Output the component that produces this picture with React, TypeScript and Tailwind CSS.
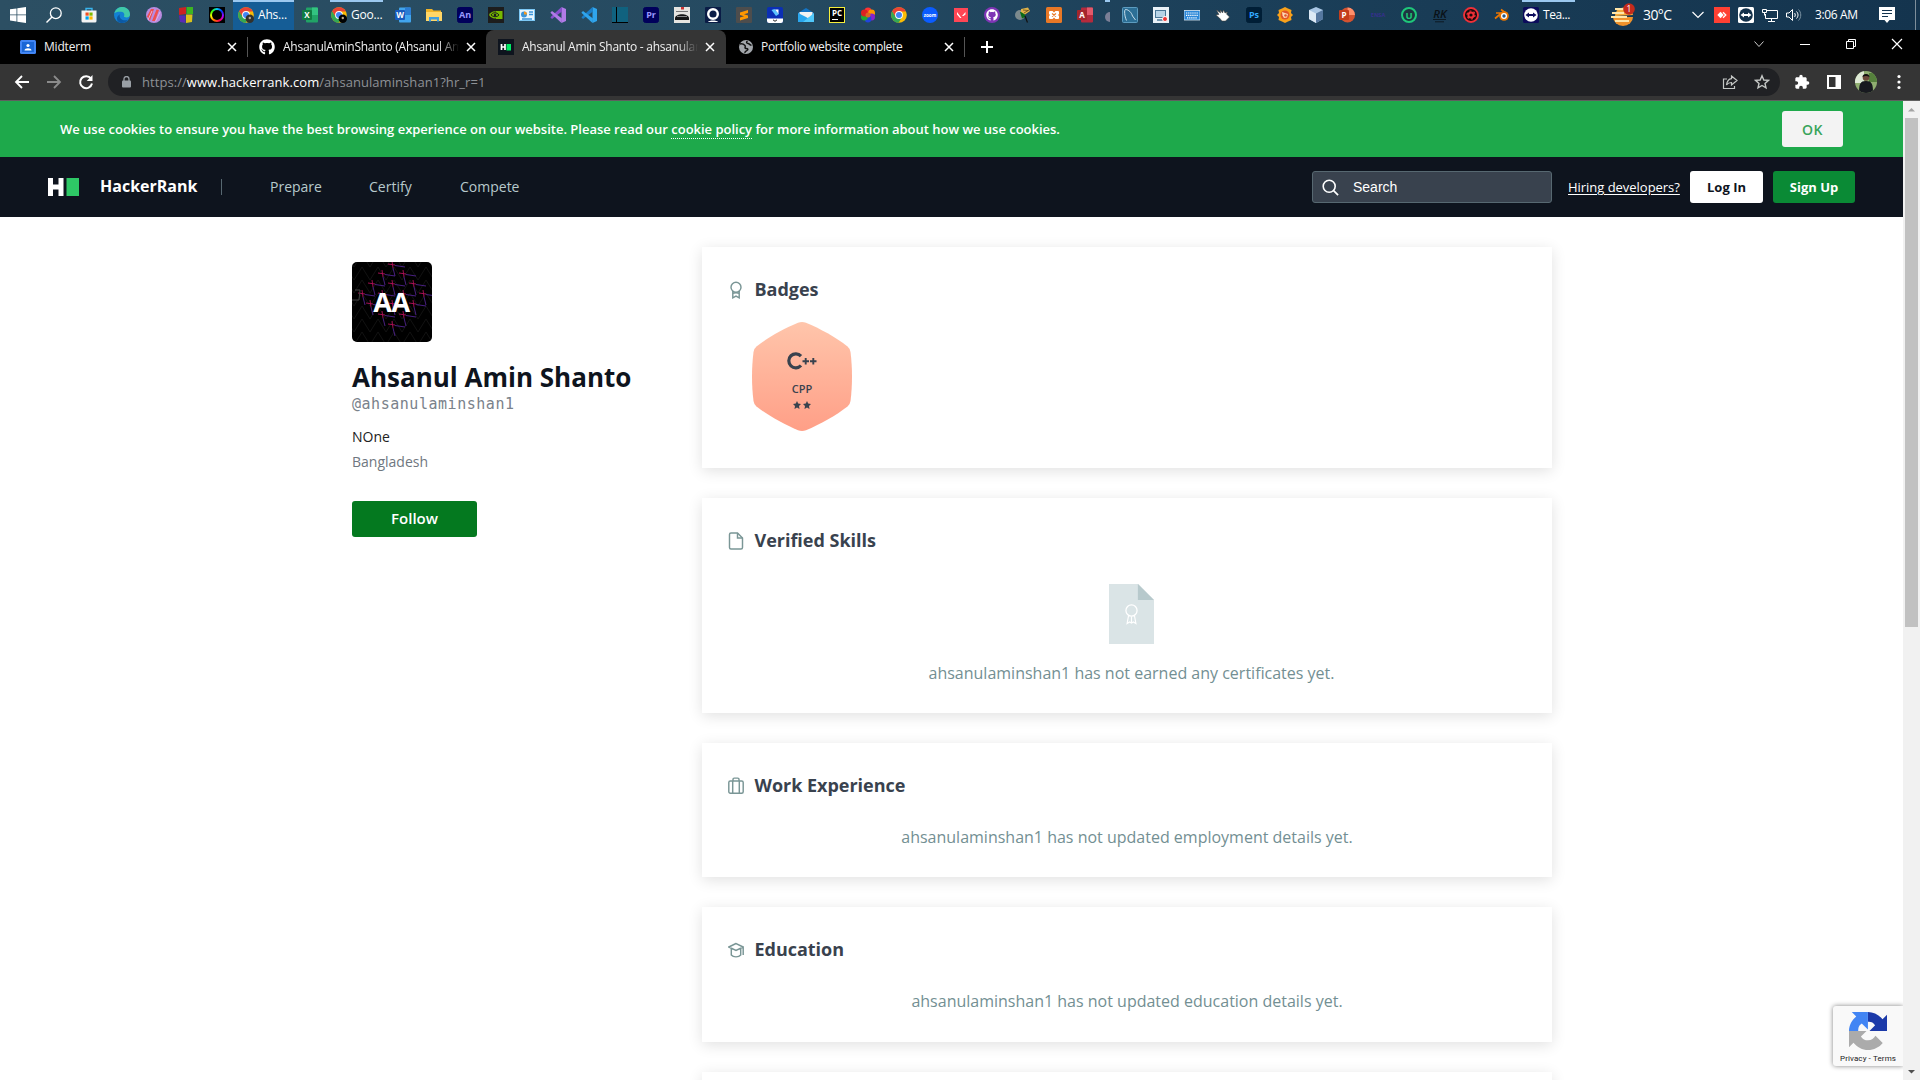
import React from "react";
import { FaGithub } from "react-icons/fa";
import { MdExtension } from "react-icons/md";

type P = { children?: React.ReactNode; size?: number; vb?: string; className?: string };

const Ic = ({ children, size = 16, vb = "0 0 16 16", className = "" }: P) => (
  <svg width={size} height={size} viewBox={vb} fill="none" className={"block shrink-0 " + className}>
    {children}
  </svg>
);

const Glyph = ({ x = 8, y = 11, s = 8, fill = "#fff", w = 700, children }: any) => (
  <text x={x} y={y} fontSize={s} fill={fill} fontWeight={w} textAnchor="middle" fontFamily="Open Sans, sans-serif">
    {children}
  </text>
);

const Chrome = ({ avatar }: { avatar?: string }) => (
  <Ic>
    <circle cx="8" cy="8" r="7.8" fill="#fbbc05" />
    <path d="M1.2 4.1A7.8 7.8 0 0 0 7.6 15.8L11.2 9.8 8 8 4.9 10Z" fill="#34a853" />
    <path d="M1.2 4.2A7.8 7.8 0 0 1 14.8 4.4H8L4.8 9.8Z" fill="#ea4335" />
    <circle cx="8" cy="8" r="3.9" fill="#fff" />
    <circle cx="8" cy="8" r="3" fill="#4285f4" />
    {avatar && <circle cx="11.8" cy="11.8" r="4.2" fill={avatar} />}
    {avatar && <circle cx="11.8" cy="11" r="1.2" fill="#b9a58c" />}
  </Ic>
);

const Office = ({ back, mid, front, l, round }: any) => (
  <Ic>
    {round ? <circle cx="8.6" cy="8" r="7.4" fill={mid} /> : <rect x="4" y="0.5" width="12" height="15" rx="1" fill={mid} />}
    <path d={round ? "M8.6 .6A7.4 7.4 0 0 1 16 8H8.6Z" : "M10 .5h5a1 1 0 0 1 1 1V8h-6Z"} fill={back} />
    <rect x="0" y="3" width="10" height="10" rx="1" fill={front} />
    <Glyph x={5} y={11} s={8}>{l}</Glyph>
  </Ic>
);

const Tile = ({ bg, fg, l, border, s = 9, y = 11 }: any) => (
  <Ic>
    <rect x=".5" y=".5" width="15" height="15" rx={border ? 0 : 2} fill={bg} stroke={border || bg} />
    <Glyph y={y} s={s} fill={fg}>{l}</Glyph>
  </Ic>
);

const Vs = ({ a, b }: { a: string; b: string }) => (
  <Ic>
    <path d="M11.5 0 16 2v12l-4.5 2Z" fill={b} />
    <path d="M11.5 0 0.4 10.2 2 12 12 4.6Z" fill={a} />
    <path d="M11.5 16 .4 5.8 2 4l10 7.4Z" fill={b} />
  </Ic>
);

const TeamViewer = ({ bg, ring, fg }: any) => (
  <Ic>
    <rect width="16" height="16" rx="1.5" fill={bg} />
    <circle cx="8" cy="8" r="6.8" fill={ring} />
    <path d="m2.5 8 3.5-2.6V7h4V5.4L13.5 8 10 10.6V9H6v1.6Z" fill={fg} />
  </Ic>
);

const middleIcons: React.ReactNode[] = [
  <Office back="#2b7cd3" mid="#41a5ee" front="#185abd" l="W" />,
  <Ic>
    <path d="M0 2h6l1.5 1.500H15V14H0Z" fill="#f0b429" />
    <path d="M0 5h16v9H0Z" fill="#ffd667" />
    <path d="M3 14.500V10h10v4.500h-2v-2H5v2Z" fill="#3f9ddf" />
  </Ic>,
  <Tile bg="#00005b" fg="#9999ff" l="An" />,
  <Ic>
    <rect width="16" height="16" fill="#1d1d1d" />
    <path d="M1 8c2-4 6-4.500 8-3v6c-3 1-6 0-8-3Z" fill="#76b900" />
    <path d="M8 4h6.500v8H8Z" fill="#76b900" />
    <path d="M3 8c1.500-3 6-3 8 0-2 2.500-6 2-8 0Z" stroke="#1d1d1d" />
    <circle cx="7" cy="8" r="1.300" fill="#1d1d1d" />
  </Ic>,
  <Ic>
    <rect y="2" width="16" height="12" fill="#7cc8f5" />
    <rect x="1" y="3" width="14" height="10" fill="#e8f5fd" />
    <circle cx="5" cy="7.500" r="3" fill="#3a93d8" />
    <path d="M5 7.500V4.500a3 3 0 0 1 3 3Z" fill="#f59a23" />
    <path d="M10 5h4M10 7.500h4M3 12h10" stroke="#3a93d8" strokeWidth="1.400" />
  </Ic>,
  <Vs a="#8a4fd0" b="#b17be8" />,
  <Vs a="#1b7fc9" b="#2fa5ee" />,
  <Ic>
    <rect width="16" height="16" fill="#10627f" />
    <path d="M4.500 0v16M0 15.500h16" stroke="#000" />
  </Ic>,
  <Tile bg="#00005b" fg="#9999ff" l="Pr" />,
  <Ic>
    <rect width="16" height="16" fill="#e6e4e0" />
    <path d="M7 0h3v2.500H7Z" fill="#c33" />
    <path d="M2 4.500h12" stroke="#777" />
    <path d="M1 11c1-5 13-5 14 0v2H1Z" fill="#151515" />
    <path d="M3 9.500h10" stroke="#888" />
  </Ic>,
  <Ic>
    <rect width="16" height="16" rx="1" fill="#0a1c46" />
    <circle cx="8" cy="7" r="4.800" stroke="#fff" strokeWidth="2.400" />
    <path d="M3 15c1-2 9-2 10 0Z" fill="#fff" />
  </Ic>,
  <Ic>
    <rect width="16" height="16" rx="1" fill="#4d4d4d" />
    <path d="m4 5.500 8-2.500v3L8 7.200l4 1.300v2.500L4 13.500v-3l4-1.200-4-1.300Z" fill="#ff9800" />
  </Ic>,
  <Ic>
    <rect width="16" height="16" rx="2" fill="#0b2fb5" />
    <path d="m4.500 3 3-1 4.500 5-3 2Z" fill="#5bc4ff" />
    <path d="M8 2.500h3.500V7Z" fill="#fff" />
    <path d="M0 11.500h16V14a2 2 0 0 1-2 2H2a2 2 0 0 1-2-2Z" fill="#fff" />
    <path d="m6 12.800 2 1.500 2-1.500" stroke="#222" />
  </Ic>,
  <Ic>
    <path d="m0 6 8-5 8 5v9H0Z" fill="#1474c4" />
    <path d="M1.500 5h13v4L8 12 1.500 9Z" fill="#f3f3f3" />
    <path d="M0 6v9h16L8 10Z" fill="#2aa7ee" />
    <path d="M16 6v9H5Z" fill="#50c8fa" />
  </Ic>,
  <Ic>
    <rect x=".5" y=".5" width="15" height="15" fill="#000" stroke="#f5ee3c" />
    <Glyph y={9} s={8}>PC</Glyph>
    <path d="M3 12.500h6" stroke="#fff" />
  </Ic>,
  <Ic>
    <circle cx="8" cy="4" r="3.400" fill="#f33" />
    <circle cx="11.600" cy="6" r="3.400" fill="#f90" />
    <circle cx="11.600" cy="10" r="3.400" fill="#82c" />
    <circle cx="8" cy="12" r="3.400" fill="#24d" />
    <circle cx="4.400" cy="10" r="3.400" fill="#2a3" />
    <circle cx="4.400" cy="6" r="3.400" fill="#d22" />
    <circle cx="8" cy="8" r="2.500" fill="#d62" />
  </Ic>,
  <Chrome />,
  <Ic>
    <circle cx="8" cy="8" r="8" fill="#0b5cff" />
    <Glyph y={9.6} s={4.6}>zoom</Glyph>
  </Ic>,
  <Ic>
    <rect x="1" y="1" width="14" height="14" fill="#ff4655" />
    <path d="m4 5 4.500 6H7L4 7.500ZM12.500 5v2.500L10.500 9H9Z" fill="#fff" />
  </Ic>,
  <span className="grid size-4 place-items-center rounded-full bg-[#7f35b5]">
    <FaGithub className="size-3 text-white" />
  </span>,
  <Ic>
    <circle cx="5" cy="8" r="5" fill="#7c8a8d" />
    <path d="M5 5h5v5l-3 1.500Z" fill="#0b6a17" />
    <path d="m6 2 7-1.500L15 4l-5 3.500L6 5Z" fill="#e1b34a" />
    <path d="m8 3 5 .5M9 6l5-3" stroke="#4d3a12" strokeWidth=".7" />
    <path d="m10 9 2.500 6.500" stroke="#111" strokeWidth="1.200" />
  </Ic>,
  <Ic>
    <rect width="16" height="16" rx="1.500" fill="#e97826" />
    <path d="M3.500 4h3L8 5.500 9.500 4h3L13 5v2l-1 1 1 1v2l-.5 1h-3L8 10.500 6.500 12h-3L3 11V9l1-1-1-1V5Z" fill="#fff" />
    <path d="m6 6.500 4 3M10 6.500l-4 3" stroke="#e97826" strokeWidth="1.200" />
  </Ic>,
  <Office back="#e3596a" mid="#b52a3c" front="#a4262c" l="A" />,
];

const rightIcons: React.ReactNode[] = [
  <Ic>
    <rect x=".5" y=".5" width="15" height="15" rx="1" fill="#2c6f96" stroke="#5d9cc0" />
    <path d="M4.500 13.500C2.500 9 2 3 3.500 2.500c3 0 6 3 7 6.500l3 4" stroke="#d8e8f2" strokeWidth=".9" />
  </Ic>,
  <Ic>
    <rect width="16" height="16" fill="#e9f1f7" />
    <rect x="2.500" y="3.500" width="10" height="7" fill="#b7d3e6" stroke="#4a7797" />
    <path d="M4 13h6" stroke="#4a7797" strokeWidth="1.500" />
    <circle cx="12" cy="12" r="2.500" fill="#e33" stroke="#fff" />
  </Ic>,
  <Ic>
    <rect y="3.500" width="16" height="9.500" fill="#2b87d8" stroke="#dcecf8" strokeWidth=".8" />
    <path d="M2 6h12M2 8.300h12M3 10.800h10" stroke="#fff" strokeWidth="1.200" strokeDasharray="1.300 .8" />
  </Ic>,
  <Ic>
    <path d="m1.500 3 4 3V3l2 3 1-3 1.500 3 2.500-1-1 2 3 3-4 4H7L4.500 11 1 8l3-.5Z" fill="#fff" stroke="#463c33" strokeWidth=".5" />
  </Ic>,
  <Tile bg="#001e36" fg="#31a8ff" l="Ps" />,
  <Ic>
    <path d="m8 0 3 1.500 3.500 1.500L14 6l2 2-2 2 .5 3L11 14.500 8 16l-3-1.500L1.500 13 2 10 0 8l2-2-.5-3L5 1.500Z" fill="#f9a11b" />
    <circle cx="8" cy="8" r="4.500" fill="#e2552a" />
    <path d="m5 5 6 2-1 3.500L7 11 5.500 8.500Z" fill="#fbd9b5" />
    <circle cx="8.500" cy="8.500" r="1.300" fill="#e2552a" />
  </Ic>,
  <Ic>
    <path d="m8 0 7 3v9l-7 4-7-4V3Z" fill="#a9c6e4" />
    <path d="m1 3 7 3.500V16l-7-4Z" fill="#dce9f5" />
    <path d="m15 3-7 3.500V16l7-4Z" fill="#55779f" />
  </Ic>,
  <Office back="#ff8f6b" mid="#d35230" front="#c43e1c" l="P" round />,
  <Ic><Glyph y={10} s={5.5} fill="#36308c">ENSA</Glyph></Ic>,
  <Ic>
    <circle cx="8" cy="8" r="7" fill="#1d3340" stroke="#1fc77a" strokeWidth="2" />
    <Glyph y={11.5} s={9.5} fill="#1fc77a">U</Glyph>
  </Ic>,
  <Ic>
    <text x="8" y="10.500" fontSize="11.500" fontStyle="italic" fontWeight="600" fill="#0a1117" textAnchor="middle" fontFamily="Open Sans, sans-serif">RK</text>
    <path d="M1 12.500h13M3 14.800h9" stroke="#0a1117" strokeWidth=".8" />
  </Ic>,
  <Ic>
    <circle cx="8" cy="8" r="7" fill="#170b0d" stroke="#ef3038" strokeWidth="1.900" />
    <circle cx="8" cy="8" r="2.600" stroke="#ef3038" strokeWidth="2" />
    <circle cx="8" cy="8" r="4" stroke="#ef3038" strokeWidth="1.200" strokeDasharray="2 2.190" />
  </Ic>,
  <Ic>
    <path d="M7 2.500 13 7M2 6h8M1 11.500l6-5" stroke="#ea7600" strokeWidth="1.700" />
    <circle cx="10" cy="9" r="4.800" fill="#ea7600" />
    <circle cx="10" cy="9" r="3" fill="#fff" />
    <circle cx="10" cy="9" r="1.700" fill="#265787" />
  </Ic>,
];

const Taskbar = () => (
  <div className="flex h-[30px] items-center overflow-hidden bg-[linear-gradient(90deg,#2c4f63_0%,#254a61_40%,#1b3f59_65%,#14344e_100%)] text-[12px] text-white">
    <div className="flex w-[233px] shrink-0 items-center pl-[10px]">
      <Ic><path d="m0 2.300 6.500-.9v6H0ZM7.300 1.300 16 0v7.400H7.300ZM0 8.300h6.500v6.200L0 13.600ZM7.300 8.300H16V16l-8.700-1.300Z" fill="#fff" /></Ic>
      <Ic className="ml-5"><circle cx="9.800" cy="6.200" r="5.400" stroke="#fff" strokeWidth="1.300" /><path d="M6 10 .5 15.500" stroke="#fff" strokeWidth="1.400" /></Ic>
      <Ic className="ml-[19px]">
        <path d="M5 4V1.500h6V4" stroke="#39b5ee" strokeWidth="1.400" />
        <path d="M.5 3.500h15V14a1.500 1.500 0 0 1-1.500 1.500H2A1.500 1.500 0 0 1 .5 14Z" fill="#f3f3f3" />
        <path d="M4.500 5.500h3.200v3.200H4.500Z" fill="#f25022" /><path d="M8.400 5.500h3.200v3.200H8.400Z" fill="#7fba00" />
        <path d="M4.500 9.400h3.200v3.200H4.500Z" fill="#00a4ef" /><path d="M8.400 9.400h3.200v3.200H8.400Z" fill="#ffb900" />
      </Ic>
      <Ic className="ml-[17px]">
        <circle cx="8" cy="8" r="8" fill="#1380d3" />
        <path d="M.3 6.500C2 1 6-.2 9 .1c5 .5 7 4.400 7 7.400 0 2-1.500 3-3.500 3-1.500 0-3-.6-2.500-1.500.8-1 .3-4-3-4.200C4 4.600 1.500 5 .3 6.500Z" fill="#3fc9a8" />
        <path d="M5.600 8.500c0 4 4 6 8.400 4.200C11 17 6 16.500 4 14.500c-2-2.500-1-6 2.500-7.500-.6.500-.9 1-.9 1.500Z" fill="#0c59a4" />
      </Ic>
      <Ic className="ml-4">
        <circle cx="8" cy="8" r="8" fill="#b98be0" />
        <path d="M1 9.500 5 2h3L4 13.500ZM6 14 10.500 2.500 13 3 9 14Z" fill="#f0504f" />
        <path d="M2 13 6 4M9.500 14.500 14 5" stroke="#e9b1e0" />
      </Ic>
      <Ic className="ml-4">
        <path d="m1 1 7-1v7L1 8Z" fill="#c22" /><path d="M8.500 0H15v7H8.500Z" fill="#3cb521" />
        <path d="M1 8.500h6.500V16L2 15Z" fill="#5a2bb5" /><path d="M8 7.500h6.500L14 15l-6 1Z" fill="#d9c21b" />
      </Ic>
      <span className="ml-[15px] grid size-4 place-items-center bg-black">
        <span className="grid size-3.5 place-items-center rounded-full bg-[conic-gradient(#0cf,#03f,#a0f,#f05,#f60,#ff0,#3f0,#0cf)]">
          <span className="size-2.5 rounded-full bg-black" />
        </span>
      </span>
    </div>
    <div className="flex h-full w-[61px] shrink-0 items-center border-t-2 border-[#9bc8ef] bg-[#155d96] pl-[5px] pb-0.5">
      <Chrome avatar="#33312b" />
      <span className="ml-1 tracking-[-0.2px]">Ahs...</span>
    </div>
    <span className="ml-2"><Office back="#33c481" mid="#21a366" front="#107c41" l="X" /></span>
    <div className="ml-3 flex h-full w-[53px] shrink-0 items-center border-t-2 border-[#9bc8ef] pl-px pb-0.5">
      <Chrome avatar="#000" />
      <span className="ml-1 tracking-[-0.2px]">Goo...</span>
    </div>
    <div className="ml-3 flex shrink-0 gap-[15px]">
      {middleIcons.map((n, i) => <React.Fragment key={i}>{n}</React.Fragment>)}
    </div>
    <div className="ml-3 h-full w-[5px] shrink-0 overflow-hidden border-t-2 border-[#9bc8ef] pt-2.5">
      <div className="size-2.5 rounded-full bg-[#7b7f96]" />
    </div>
    <div className="ml-3 flex shrink-0 gap-[15px]">
      {rightIcons.map((n, i) => <React.Fragment key={i}>{n}</React.Fragment>)}
    </div>
    <div className="ml-3 flex h-full w-[53px] shrink-0 items-center border-t-2 border-[#9bc8ef] pl-px pb-0.5">
      <TeamViewer bg="#0c0c5c" ring="#fff" fg="#0c0c5c" />
      <span className="ml-1 tracking-[-0.4px]">Tea...</span>
    </div>
    <svg width="26" height="24" viewBox="0 0 26 24" className="ml-9 shrink-0">
      <path d="M2 14a10 9 0 0 0 20 0Z" fill="#f0922b" />
      <path d="M4 13a9 8 0 0 1 18-1Z" fill="#f5a93b" />
      <path d="M4 6h10M1 10h12M0 14h16M4 18h14" stroke="#ffe6a8" strokeWidth="1.800" />
      <circle cx="18" cy="6" r="5.800" fill="#c42b1c" />
      <text x="18" y="9" fontSize="8.500" fill="#fff" textAnchor="middle" fontFamily="Open Sans, sans-serif">1</text>
    </svg>
    <span className="ml-1.5 w-[49px] shrink-0 pb-px text-[14px] tracking-[-0.6px]">30°C</span>
    <svg width="12" height="8" viewBox="0 0 12 8" fill="none" className="shrink-0"><path d="m.5 1 5.500 5.500L11.500 1" stroke="#fff" strokeWidth="1.200" /></svg>
    <div className="ml-2.5 flex shrink-0 gap-2">
      <Ic><rect width="16" height="16" fill="#ff4033" /><path d="m6.500 4.800 3.200 3.200-3.200 3.200L3.300 8Z" fill="#fff" /><path d="m9 5.200 2.800 2.800L9 10.800" stroke="#fff" strokeWidth="1.300" /></Ic>
      <TeamViewer bg="#fff" ring="#12304a" fg="#fff" />
      <Ic><path d="M5 3.500h10.500v8H3.500V7M9.500 11.500v3M6 14.500h7" stroke="#fff" /><path d="M.5 2.500h4v3h-4ZM2.500 5.500v3" stroke="#fff" /></Ic>
      <Ic><path d="M.5 6h2.500L6.500 2.500v11L3 10H.5Z" stroke="#fff" /><path d="M8.500 6c1 1 1 3 0 4M10.500 4.500c2 2 2 5 0 7" stroke="#fff" /><path d="M12.500 2.500c3 3 3 8 0 11" stroke="#7b93a3" /></Ic>
    </div>
    <span className="ml-[13px] w-16 shrink-0 tracking-[-0.35px]">3:06 AM</span>
    <Ic><path d="M0 0h16v13h-5.500L8 16l-2.500-3H0Z" fill="#fff" /><path d="M3 3.500h10M3 6.500h10M3 9.500h6" stroke="#14344e" /></Ic>
    <div className="ml-5 h-full w-px bg-[#7d8e9b]" />
  </div>
);

const Close = ({ className = "" }: { className?: string }) => (
  <svg width="10" height="10" viewBox="0 0 10 10" className={"shrink-0 " + className}>
    <path d="m1 1 8 8M9 1 1 9" stroke="#fff" strokeWidth="1.500" />
  </svg>
);

const TabStrip = () => (
  <div className="flex h-[34px] items-center bg-black text-[12px] text-[#f1f1f1]">
    <div className="flex w-[247px] shrink-0 items-center pl-5">
      <Ic><rect y="1" width="16" height="14" rx="1.500" fill="#4285f4" /><rect x="2" y="3" width="12" height="10" fill="#1a66d6" /><circle cx="8" cy="6.500" r="1.600" fill="#fff" /><path d="M4.500 11.500c0-3 7-3 7 0Z" fill="#fff" /></Ic>
      <span className="ml-2 w-[174px] tracking-[-0.2px]">Midterm</span>
      <Close className="ml-[9px]" />
    </div>
    <div className="h-5 w-px bg-[#555]" />
    <div className="flex h-full w-[238px] shrink-0 items-center pl-[11px]">
      <FaGithub className="size-4 text-white" />
      <span className="ml-2 w-[176px] overflow-hidden whitespace-nowrap tracking-[-0.25px] [mask-image:linear-gradient(90deg,#000_88%,transparent)]">AhsanulAminShanto (Ahsanul Amin)</span>
      <Close className="ml-[7px]" />
    </div>
    <div className="flex h-full w-[240px] shrink-0 items-center rounded-t-lg bg-[#353535] pl-3">
      <Ic><rect width="16" height="16" fill="#0e141e" /><path d="M3.500 5v6M7 5v6M3.500 8H7" stroke="#fff" strokeWidth="1.700" /><rect x="8.500" y="5" width="4.500" height="6.500" fill="#00ea64" /></Ic>
      <span className="ml-2 w-[176px] overflow-hidden whitespace-nowrap tracking-[-0.26px] [mask-image:linear-gradient(90deg,#000_88%,transparent)]">Ahsanul Amin Shanto - ahsanulaminshan1</span>
      <Close className="ml-[7px]" />
    </div>
    <div className="flex w-[238px] shrink-0 items-center pl-3">
      <Ic><circle cx="8" cy="8" r="7" fill="#a2a6ab" /><path d="M2 5c2.500-.5 4 .5 5 1.500S6 9.500 8 9.500s2.500 1 1 2-2.500 1-2 2.500" stroke="#111" strokeWidth="1.500" /><path d="M9.500 2C8 3 8.500 4.500 10 4.500s2 2 3.500 1.500" stroke="#111" strokeWidth="1.500" /></Ic>
      <span className="ml-[7px] w-[176px] tracking-[-0.32px]">Portfolio website complete</span>
      <Close className="ml-[7px]" />
    </div>
    <div className="h-5 w-px bg-[#555]" />
    <svg width="14" height="14" viewBox="0 0 14 14" className="ml-[15px] mr-auto"><path d="M7 1v12M1 7h12" stroke="#fff" strokeWidth="2" /></svg>
    <div className="flex gap-[34px] pb-1.5 pr-[17px]">
      <svg width="12" height="12" viewBox="0 0 12 12" fill="none"><path d="m1.500 3.500 4.500 5 4.500-5" stroke="#ccc" /></svg>
      <svg width="12" height="12" viewBox="0 0 12 12"><path d="M1 6.500h10" stroke="#fff" /></svg>
      <svg width="12" height="12" viewBox="0 0 12 12" fill="none"><path d="M1.500 3.500h7v7h-7ZM3.500 3V1.500h7v7H9" stroke="#fff" /></svg>
      <svg width="12" height="12" viewBox="0 0 12 12"><path d="m1 1 10 10M11 1 1 11" stroke="#fff" strokeWidth="1.200" /></svg>
    </div>
  </div>
);

const Toolbar = () => (
  <div className="flex h-[37px] items-center border-b border-[#5f5f5f] bg-[#353535] pl-3.5 pr-4">
    <Ic><path d="M15 8H2M8 2 2 8l6 6" stroke="#fff" strokeWidth="1.800" /></Ic>
    <Ic className="ml-4"><path d="M1 8h13M8 2l6 6-6 6" stroke="#8b8b8b" strokeWidth="1.800" /></Ic>
    <Ic className="ml-4"><path d="M13 4.600A6 6 0 1 0 14 9.500" stroke="#fff" strokeWidth="2" /><path d="M14.500 1v6H8.700Z" fill="#fff" /></Ic>
    <div className="ml-3.5 flex h-7 w-[1672px] items-center rounded-full bg-[#202124] pl-3.5 pr-2.5">
      <svg width="9" height="12" viewBox="0 0 9 12" fill="none"><path d="M2 5V3a2.500 2.500 0 0 1 5 0v2" stroke="#9aa0a6" strokeWidth="1.300" /><rect y="4.500" width="9" height="7" rx="1" fill="#9aa0a6" /></svg>
      <span className="ml-[11px] mr-auto pt-px text-[13px] tracking-[0.06px] text-[#8e9196]">https://<span className="text-white">www.hackerrank.com</span>/ahsanulaminshan1?hr_r=1</span>
      <Ic><path d="M5 5H1.500v9.500h11V12" stroke="#c4c7c5" strokeWidth="1.200" /><path d="M9.500 2 15 6.500 9.500 11V8.500C7 8.500 5.500 9.500 4.500 11 5 7.500 6.500 5 9.500 4.700Z" stroke="#c4c7c5" strokeWidth="1.200" /></Ic>
      <Ic className="ml-4"><path d="m8 1.800 1.800 4.200 4.700.4-3.500 3 1 4.500L8 11.500 4 13.900l1-4.500-3.500-3L6.200 6Z" stroke="#c4c7c5" strokeWidth="1.400" /></Ic>
    </div>
    <MdExtension className="ml-[14px] size-4 text-white" />
    <svg width="14" height="14" viewBox="0 0 14 14" className="ml-[17px]"><path d="M0 0h14v14H0ZM2 2v10h6.500V2Z" fill="#fff" fillRule="evenodd" /></svg>
    <svg width="22" height="22" viewBox="0 0 22 22" className="ml-3.5 rounded-full">
      <rect width="22" height="22" fill="#8fae70" /><path d="M0 0h9v12H0Z" fill="#dfead6" /><path d="M14 2h8v9h-8Z" fill="#55803c" />
      <path d="M4 22c0-9 1-12 7-12s7 3 7 12Z" fill="#17191f" /><circle cx="11" cy="6.500" r="3.300" fill="#6b4a3a" /><path d="M7.500 6c0-4 7-4 7 0-2-1.500-5-1.500-7 0Z" fill="#111" />
    </svg>
    <svg width="4" height="16" viewBox="0 0 4 16" className="ml-5"><circle cx="2" cy="2.500" r="1.600" fill="#fff" /><circle cx="2" cy="8" r="1.600" fill="#fff" /><circle cx="2" cy="13.500" r="1.600" fill="#fff" /></svg>
  </div>
);

const CookieBar = () => (
  <div className="flex h-14 items-center justify-between bg-[#1ea94b] pl-[60px] pr-[60px]">
    <p className="pt-0.5 text-[13px] font-semibold tracking-[-0.013px] text-white">
      We use cookies to ensure you have the best browsing experience on our website. Please read our{" "}
      <a className="border-b border-dotted border-white">cookie policy</a> for more information about how we use cookies.
    </p>
    <button className="h-9 w-[61px] rounded-[3px] bg-[#f3f3f3] text-[14px] font-semibold tracking-[0.5px] text-[#39a45b]">OK</button>
  </div>
);

const Nav = () => (
  <div className="flex h-[60px] items-center bg-[#0e141e] pl-12 pr-12">
    <svg width="32" height="18" viewBox="0 0 32 18"><path d="M0 0h5v6.500h5.500V0h5v18h-5v-6.500H5V18H0Z" fill="#fff" /><path d="M18.500 0H31v18H18.500Z" fill="#2ec866" /></svg>
    <span className="ml-5 w-[121px] pb-0.5 text-[16px] font-bold text-white">HackerRank</span>
    <div className="h-4 w-px bg-[#576871]" />
    <nav className="ml-12 flex pb-0.5 text-[14px] text-[#b7c9cc]">
      <a className="w-[99px]">Prepare</a>
      <a className="w-[91px]">Certify</a>
      <a>Compete</a>
    </nav>
    <div className="ml-auto flex h-8 w-60 items-center rounded-[3px] border border-[#576871] bg-[#39424e] pl-[9px]">
      <Ic size={17} vb="0 0 17 17"><circle cx="7.200" cy="7.200" r="6" stroke="#fff" strokeWidth="1.600" /><path d="m11.600 11.600 4.500 4.500" stroke="#fff" strokeWidth="1.600" /></Ic>
      <span className="ml-[14px] font-['Liberation_Sans',sans-serif] text-[14px] text-white">Search</span>
    </div>
    <a className="ml-4 w-[122px] pt-0.5 text-[13px] tracking-[-0.03px] text-white underline underline-offset-2">Hiring developers?</a>
    <button className="h-8 w-[73px] rounded-[3px] bg-white pt-px text-[13px] font-bold text-[#0e141e]">Log In</button>
    <button className="ml-2.5 h-8 w-[82px] rounded-[3px] bg-[#0a8a35] pt-px text-[13px] font-bold text-white">Sign Up</button>
  </div>
);

const sparks = [[40, 3], [30, 12], [51, 12], [20, 22], [40, 22], [61, 22], [10, 32], [71, 32], [30, 32], [51, 32], [18, 42], [61, 42], [40, 42], [30, 53], [51, 53], [40, 63]];

const Sidebar = () => (
  <aside className="w-[350px] shrink-0 pt-[15px]">
    <div className="relative grid size-20 place-items-center overflow-hidden rounded-[5px] bg-black">
      <svg width="80" height="80" className="absolute inset-0" fill="none">
        {[0, 1, 2, 3, 4, 5, 6].map((r) => (
          <path key={r} d={`M-6 ${r * 13 - 8}l8 13 8-13 8 13 8-13 8 13 8-13 8 13 8-13 8 13 8-13 8 13`} stroke="#161616" strokeWidth=".8" />
        ))}
        {sparks.map(([x, y], i) => (
          <g key={i}>
            <path d={`M${x - 4} ${y - 1}l7 1M${x} ${y - 4}l1 7`} stroke="#b01058" strokeWidth=".9" />
            <path d={`M${x + 3} ${y + .5}l10 1.500M${x + 1} ${y + 3}l2 8`} stroke="#502490" strokeWidth=".9" />
          </g>
        ))}
        <path d="M0 38h7l1-10H3" stroke="#444" />
      </svg>
      <span className="relative mr-px text-[27px] font-bold tracking-[-0.5px] text-white">AA</span>
    </div>
    <h1 className="mt-[17px] text-[26px] leading-9 font-bold whitespace-nowrap text-[#0e141e]">Ahsanul Amin Shanto</h1>
    <p className="-mt-[3px] font-['DejaVu_Sans_Mono',monospace] text-[15px] leading-6 tracking-[0.53px] text-[#7a828b]">@ahsanulaminshan1</p>
    <p className="mt-[9px] text-[14px] leading-6 text-[#222]">NOne</p>
    <p className="mt-px text-[14px] leading-6 text-[#6f7780]">Bangladesh</p>
    <button className="mt-[27px] block h-9 w-[125px] rounded-[3px] bg-[#04791f] pb-px text-[15px] font-semibold text-white">Follow</button>
  </aside>
);

const Card = ({ icon, title, h, children }: { icon?: React.ReactNode; title?: string; h: string; children?: React.ReactNode }) => (
  <section className={"bg-white px-[26px] pt-[30px] shadow-[0_3px_14px_rgba(0,0,0,0.12)] " + h}>
    {title && (
      <header className="flex h-6 items-center">
        <svg width="16" height="18" viewBox="0 0 16 18" fill="none" stroke="#7a9696" strokeWidth="1.450" className="mt-0.5">{icon}</svg>
        <h2 className="ml-[10.5px] text-[18px] font-bold tracking-[-0.02px] text-[#39424e]">{title}</h2>
      </header>
    )}
    {children}
  </section>
);

const Empty = ({ children, className }: any) => <p className={"text-center text-[16px] leading-6 text-[#738f93] " + className}>{children}</p>;

const Star = () => (
  <svg width="8" height="8" viewBox="0 0 8 8"><path d="m4 0 1.200 2.600L8 3 6 5l.5 3L4 6.600 1.500 8 2 5 0 3l2.800-.4Z" fill="#39424e" /></svg>
);

const Badge = () => (
  <div className="relative mt-[21px] ml-6 h-[109px] w-[100px]">
    <svg width="100" height="109" viewBox="0 0 100 109" className="absolute inset-0">
      <defs><linearGradient id="bronze" x1="0" y1="0" x2="0" y2="1"><stop stopColor="#ffc5ab" /><stop offset="1" stopColor="#ff9f87" /></linearGradient></defs>
      <path d="M46 .8Q50-.7 54 .8C68 6.500 84 15.500 95.500 24.500Q98 26.500 98.500 30C100.500 46 100.500 63 98.500 79Q98 82.500 95.500 84.500C84 93.500 68 102.500 54 108.200Q50 109.700 46 108.200C32 102.500 16 93.500 4.500 84.500Q2 82.500 1.500 79C-.5 63-.5 46 1.500 30Q2 26.500 4.500 24.500C16 15.500 32 6.500 46 .8Z" fill="url(#bronze)" />
      <path d="M48.500 33.800A7 7 0 1 0 48.500 43.200" transform="translate(.5 .3)" stroke="#39424e" strokeWidth="3.200" fill="none" />
      <path d="M50.500 39.300h6.500M53.700 36v6.600M58 39.300h6.500M61.300 36v6.600" stroke="#39424e" strokeWidth="1.900" />
    </svg>
    <div className="relative flex flex-col items-center pt-[60px]">
      <span className="text-[11px] leading-[14px] font-semibold text-[#39424e]">CPP</span>
      <span className="mt-[5px] flex gap-0.5"><Star /><Star /></span>
    </div>
  </div>
);

const Page = () => (
  <div className="relative min-w-0 flex-1 overflow-hidden bg-white">
    <CookieBar />
    <Nav />
    <div className="flex pt-[30px] pl-[352px]">
      <Sidebar />
      <div className="flex w-[850px] flex-col gap-[30px]">
        <Card h="h-[221px]" title="Badges" icon={<><circle cx="8" cy="6.200" r="5" /><path d="M4.800 10v6.800L8 15l3.200 1.800V10M4.800 12.500C6 11.500 10 11.500 11.200 12.500" /></>}>
          <Badge />
        </Card>
        <Card h="h-[215px]" title="Verified Skills" icon={<><path d="M9.500 1H3a1.500 1.500 0 0 0-1.500 1.500v13A1.500 1.500 0 0 0 3 17h10a1.500 1.500 0 0 0 1.500-1.500V6Z" /><path d="M9.500 1v5h5" /></>}>
          <svg width="45" height="60" viewBox="0 0 46 60" preserveAspectRatio="none" fill="none" className="mt-8 ml-[381px]">
            <path d="M0 0h30l16 16v44H0Z" fill="#dae4e6" /><path d="M29.500 0 46 16H29.500Z" fill="#b7c9cc" />
            <circle cx="23" cy="26.500" r="5.700" stroke="#fff" strokeWidth="1.300" />
            <path d="m20 31.500-1.500 8 2.500-1.500 2 1 2-1 2.500 1.500-1.500-8M23 32.500v6" stroke="#fff" strokeWidth="1.200" />
          </svg>
          <Empty className="mt-[17px] pl-[9px]">ahsanulaminshan1 has not earned any certificates yet.</Empty>
        </Card>
        <Card h="h-[134px]" title="Work Experience" icon={<><rect x=".8" y="4" width="14.400" height="12.200" rx="1.500" /><path d="M4.700 16V4M11.300 16V4M5 4V2.300a1.200 1.200 0 0 1 1.200-1.200h3.600A1.200 1.200 0 0 1 11 2.300V4" /></>}>
          <Empty className="mt-[28px]">ahsanulaminshan1 has not updated employment details yet.</Empty>
        </Card>
        <Card h="h-[135px]" title="Education" icon={<path d="M8 2.500 .8 6 8 9.500 15.200 6ZM3.300 7.500v6.500c2 2.500 7.400 2.500 9.400 0V7.500M15.200 6v8" />}>
          <Empty className="mt-[28px]">ahsanulaminshan1 has not updated education details yet.</Empty>
        </Card>
        <Card h="h-[135px]" />
      </div>
    </div>
    <div className="absolute top-[905px] right-0 flex h-[60px] w-[70px] flex-col items-center rounded-l-[3px] bg-[#f9f9f9] pt-1.5 shadow-[0_0_5px_gray]">
      <svg width="38" height="38" viewBox="0 0 64 64">
        <path d="M64 31.955V4.650l-7.550 7.550C50.270 4.640 40.870 0 32 0v16.500c2.300 0 6 .1 8.500 2.200l3.500 3.500-9.500 9.755Z" fill="#1c3aa9" />
        <path d="M31.862.010H4.650l7.550 7.550C4.640 13.740 0 22.500 0 32h15.500c0-4 .6-6.600 2.500-9.500l3.500-3.300 10.362 10.310Z" fill="#4285f4" />
        <path d="M0 32v27.200l7.550-7.550C13.740 59.220 22.500 64 32 64c10.040 0 18.960-4.600 24.800-11.800L44.500 40c-2.500 4.500-6.500 7.700-12.500 7.700-5 0-9-2-12-6.500L29.500 32Z" fill="#ababab" />
      </svg>
      <span className="mt-[4px] font-[Roboto,sans-serif] text-[8px] leading-[10px] tracking-[0.1px] whitespace-nowrap text-[#222]">Privacy&nbsp;-&nbsp;Terms</span>
    </div>
  </div>
);

export default function App() {
  return (
    <div className="flex h-[1080px] w-[1920px] flex-col overflow-hidden font-['Open_Sans','Noto_Sans',sans-serif]">
      <Taskbar />
      <TabStrip />
      <Toolbar />
      <div className="flex min-h-0 flex-1">
        <Page />
        <div className="flex w-[17px] shrink-0 flex-col items-center bg-[#f1f1f1]">
          <svg width="17" height="17"><path d="m5 10.500 3.500-3.500 3.500 3.500Z" fill="#a3a3a3" /></svg>
          <div className="h-[509px] w-[13px] bg-[#c1c1c1]" />
          <svg width="17" height="17" className="mt-auto"><path d="m5 7 3.500 3.500L12 7Z" fill="#505050" /></svg>
        </div>
      </div>
    </div>
  );
}
